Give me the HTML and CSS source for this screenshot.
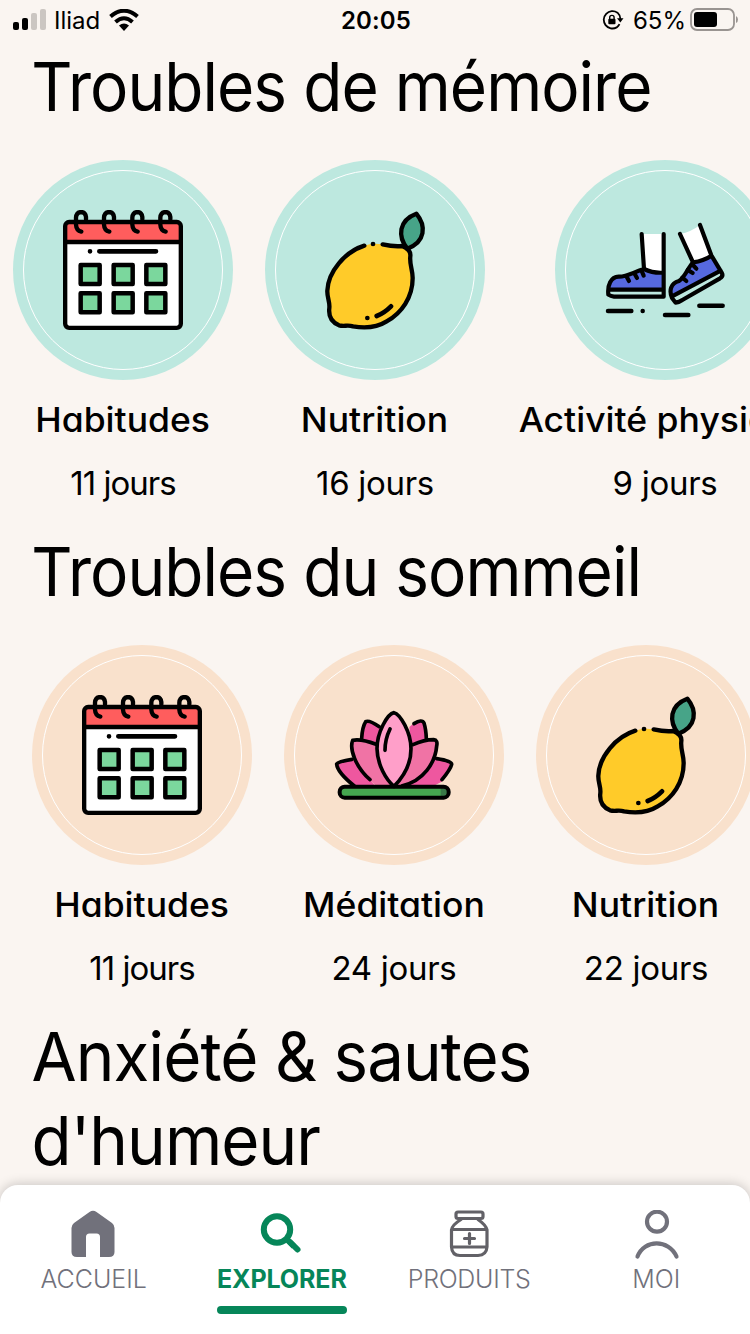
FILE: index.html
```
<!DOCTYPE html>
<html lang="fr">
    <head>
        <meta charset="utf-8">
        <title>Explorer</title>
        <link rel="stylesheet" href="styles.css">
    </head>

    <body>
        <!-- shared pictures -->
        <svg class="sprites">
            <symbol id="calendar" viewBox="159 165 360 360">
                <rect x="165" y="201" width="348" height="318" rx="14" fill="#fff"/>
                <path d="M165 260V213q0-12 12-12H501q12 0 12 12V260Z" fill="#ff5d5d"/>
                <g fill="none" stroke="#000" stroke-width="13" stroke-linecap="round">
                    <rect x="165.500" y="201" width="347" height="317.500" rx="12"/>
                    <path d="M165 261H513M268 289H438M240 289h.1" stroke-width="14"/>
                    <path d="M228 193V186Q226 171 213 171Q199 172 198 188V209Q199 227 214 230M312 193V186Q310 171 297 171Q283 172 282 188V209Q283 227 298 230M397 193V186Q395 171 382 171Q368 172 367 188V209Q368 227 383 230M481 193V186Q479 171 466 171Q452 172 451 188V209Q452 227 467 230" stroke-width="13"/>
                </g>
                <g fill="#7bd79d" stroke="#000" stroke-width="13.500" stroke-linejoin="round">
                    <rect x="212" y="330" width="57" height="57"/>
                    <rect x="311" y="330" width="57" height="57"/>
                    <rect x="409" y="330" width="57" height="57"/>
                    <rect x="212" y="415" width="57" height="57"/>
                    <rect x="311" y="415" width="57" height="57"/>
                    <rect x="409" y="415" width="57" height="57"/>
                </g>
            </symbol>

            <symbol id="lemon" viewBox="165 165 360 360">
                <path d="M313 272C255 290 204 350 202 407C201 427 210 440 208 459C205 484 212 501 237 511C253 515 263 509 279 514C313 520 350 518 380 499C425 474 458 427 458 369C458 344 448 329 451 303C453 286 441 279 426 273C407 275 390 273 368 268Q336 263 313 272Z" fill="#ffcb29"/>
                <path d="M442 281C413 245 415 196 469 176C499 212 497 261 442 281Z" fill="#47a488"/>
                <g fill="none" stroke="#000" stroke-width="13" stroke-linecap="round" stroke-linejoin="round">
                    <path d="M313 272C255 290 204 350 202 407C201 427 210 440 208 459C205 484 212 501 237 511C253 515 263 509 279 514C313 520 350 518 380 499C425 474 458 427 458 369C458 344 448 329 451 303C453 286 441 279 426 273C407 275 390 273 368 268"/>
                    <path d="M442 281C413 245 415 196 469 176C499 212 497 261 442 281Z"/>
                    <path d="M339 267h.1M322 489h.1M350 483Q373 474 393 454" stroke-width="14"/>
                </g>
            </symbol>

            <symbol id="shoes" viewBox="165 165 360 360">
                <path d="M275 237H341V353L316 351L282 342ZM390 237Q423 231 450 210L482 302Q461 318 429 322Z" fill="#fff"/>
                <path d="M176 404C177 382 186 366 206 365C230 366 249 352 282 342Q309 355 341 353V404ZM364 424C356 398 367 385 387 378C406 366 413 339 429 322Q461 318 485 303L515 350Z" fill="#5669df"/>
                <path d="M175 405H340V425H190L175 419ZM365 427L512 353L518 363L377 443Z" fill="#bde8df"/>
                <g fill="none" stroke="#000" stroke-width="12.500" stroke-linecap="round" stroke-linejoin="round">
                    <path d="M275 237L282 342C249 352 230 366 206 365C182 366 172 391 175 419Q182 424 192 425H341V237M177 404H340M282 342Q309 355 339 353"/>
                    <path d="M390 237L429 322C413 339 406 366 387 378C361 385 357 408 366 429L377 443Q387 442 397 435L510 370Q521 363 515 353L484 301L450 210M366 424L512 347M429 322Q461 318 483 303"/>
                    <path d="M275 348L281 362M253 355L261 369M230 365L237 378M426 327L439 341M413 345L428 354M397 368L409 378"/>
                    <path d="M174 468H244M278 468h.1M345 480H415M448 452H518" stroke-width="13.500"/>
                </g>
            </symbol>

            <symbol id="lotus" viewBox="162 165 360 360">
                <path d="M242 302Q245 262 257 245Q265 237 301 261L294 310ZM388 261L404 247Q427 234 433 256Q440 278 440 302L394 320Z" fill="#ee579f"/>
                <path d="M220 357Q180 362 170 372Q171 389 188 409Q206 433 228 440L285 437ZM465 356Q503 359 515 370Q514 390 485 425L455 441L365 439Z" fill="#ee579f"/>
                <path d="M215 302C232 294 270 305 290 319Q288 381 334 437L285 435Q213 373 215 302ZM394 319Q428 300 460 299Q474 300 470 318C468 364 438 423 364 438H350Q398 378 394 319Z" fill="#f073a5"/>
                <path d="M342 218C322 222 291 277 291 326C292 375 319 420 342 439C369 412 393 374 393 326C393 276 360 222 342 218Z" fill="#ff9fc9"/>
                <rect x="179" y="440" width="326" height="34" rx="14" fill="#45a750"/>
                <path d="M482 444H499Q506 456 499 469H482Z" fill="#397948"/>
                <g fill="none" stroke="#000" stroke-width="11" stroke-linecap="round" stroke-linejoin="round">
                    <path d="M342 218C322 222 291 277 291 326C292 375 319 420 342 439C369 412 393 374 393 326C393 276 360 222 342 218ZM330 267Q315 298 315 331"/>
                    <path d="M298 260Q267 239 257 245Q247 260 245 295M402 251Q426 236 432 249Q438 268 439 296"/>
                    <path d="M288 313Q244 296 218 301C208 326 226 381 270 419M399 314Q432 299 461 299Q474 300 470 318C466 368 430 423 367 437"/>
                    <path d="M216 358Q175 364 170 372Q172 397 223 438M470 356Q516 363 515 373Q512 387 486 419"/>
                    <rect x="179" y="440" width="327" height="33" rx="15" stroke-width="12"/>
                </g>
            </symbol>
        </svg>

        <div class="status-bar">
            <div class="status-left">
                <svg width="34" height="22" viewBox="0 0 34 22">
                    <rect y="13" width="6" height="8" rx="2"/>
                    <rect x="9" y="9" width="6" height="12" rx="2"/>
                    <rect x="18" y="4" width="6" height="17" rx="2" fill="#cbc6c2"/>
                    <rect x="27" width="6" height="21" rx="2" fill="#cbc6c2"/>
                </svg>
                <span class="carrier">Iliad</span>
                <svg width="30" height="22" viewBox="0 0 30 22">
                    <g fill="none" stroke="#000" stroke-width="4">
                        <path d="M1.500 7.500Q15-4 28.500 7.500M6.500 13Q15 5.500 23.500 13"/>
                    </g>
                    <path d="M10 16.500Q15 12.500 20 16.500L15 22Z"/>
                </svg>
            </div>
            <div class="clock">20:05</div>
            <div class="status-right">
                <svg width="22" height="20" viewBox="0 0 22 20">
                    <path d="M15.500 2.700A8.700 8.700 0 1 0 14.700 17.400M15.500 2.700A8.700 8.700 0 0 1 18.400 9M17.500 14.200A8.700 8.700 0 0 1 14.700 17.400" fill="none" stroke="#000" stroke-width="1.800"/>
                    <path d="M15 8.200H21.500L18.300 12.500Z"/>
                    <rect x="6.300" y="8.700" width="7.200" height="5.600" rx="1"/>
                    <path d="M7.700 9V7.500Q7.700 5.400 9.900 5.400Q12.100 5.400 12.100 7.500V9" fill="none" stroke="#000" stroke-width="1.400"/>
                </svg>
                <span class="percent">65%</span>
                <svg width="49" height="24" viewBox="0 0 49 24">
                    <rect x="1" y="1" width="43" height="21" rx="6" fill="none" stroke="#999491" stroke-width="1.800"/>
                    <rect x="4" y="4" width="23" height="15" rx="3"/>
                    <path d="M46 8Q48 9 48 11.500T46 15Z" fill="#999491"/>
                </svg>
            </div>
        </div>

        <main class="content">
            <section>
                <h1>Troubles de mémoire</h1>
                <div class="programs mint scrolled">
                    <div class="program">
                        <div class="circle"><svg class="picture"><use href="#calendar"/></svg></div>
                        <div class="name">Habitudes</div>
                        <div class="days eleven">11 jours</div>
                    </div>
                    <div class="program">
                        <div class="circle"><svg class="picture"><use href="#lemon"/></svg></div>
                        <div class="name">Nutrition</div>
                        <div class="days">16 jours</div>
                    </div>
                    <div class="program wide">
                        <div class="circle"><svg class="picture"><use href="#shoes"/></svg></div>
                        <div class="name">Activité physique</div>
                        <div class="days">9 jours</div>
                    </div>
                </div>
            </section>

            <section>
                <h1>Troubles du sommeil</h1>
                <div class="programs peach">
                    <div class="program">
                        <div class="circle"><svg class="picture"><use href="#calendar"/></svg></div>
                        <div class="name">Habitudes</div>
                        <div class="days eleven">11 jours</div>
                    </div>
                    <div class="program">
                        <div class="circle"><svg class="picture"><use href="#lotus"/></svg></div>
                        <div class="name">Méditation</div>
                        <div class="days">24 jours</div>
                    </div>
                    <div class="program">
                        <div class="circle"><svg class="picture"><use href="#lemon"/></svg></div>
                        <div class="name">Nutrition</div>
                        <div class="days">22 jours</div>
                    </div>
                </div>
            </section>

            <section>
                <h1 class="long-title">Anxiété &amp; sautes d'humeur</h1>
            </section>
        </main>

        <nav class="tab-bar">
            <a class="tab">
                <svg width="50" height="50" viewBox="0 0 50 50">
                    <path d="M20.500 2Q24-.5 27.500 2L43 13Q45.500 15 45.500 18V42Q45.500 47 40 47H31V27Q31 23.500 27.500 23.500H20.500Q17 23.500 17 27V47H8Q2.500 47 2.500 42V18Q2.500 15 5 13Z" fill="currentColor"/>
                </svg>
                <span>ACCUEIL</span>
            </a>
            <a class="tab active">
                <svg width="50" height="50" viewBox="0 0 50 50">
                    <circle cx="20" cy="19.500" r="13.200" fill="none" stroke="currentColor" stroke-width="6"/>
                    <path d="M29 28.500L37 36.500" fill="none" stroke="currentColor" stroke-width="6"/>
                    <path d="M33.500 32.500L40.500 39.500" fill="none" stroke="currentColor" stroke-width="6" stroke-linecap="round"/>
                </svg>
                <span>EXPLORER</span>
            </a>
            <a class="tab products">
                <svg width="48" height="50" viewBox="0 0 48 50">
                    <g fill="none" stroke="#626167" stroke-width="3.200" stroke-linejoin="round" stroke-linecap="round">
                        <rect x="11" y="2" width="27" height="6.500" rx="2"/>
                        <path d="M16 9.500Q7 15 6.500 20V37Q7 45.500 15 45.500H33Q41.500 45 42 37V20Q41 15 33 9.500M7 19.500H42M7 37H42M19.500 28.500H29.500M24.500 23.500V33.500"/>
                    </g>
                </svg>
                <span>PRODUITS</span>
            </a>
            <a class="tab">
                <svg width="48" height="50" viewBox="0 0 48 50">
                    <g fill="none" stroke="currentColor" stroke-width="4.200" stroke-linecap="round">
                        <circle cx="25" cy="11.700" r="10"/>
                        <path d="M5.500 46.500C12 29 37 29 44.500 46.500"/>
                    </g>
                </svg>
                <span>MOI</span>
            </a>
        </nav>
    </body>
</html>
```
FILE: styles.css
```
*,
*::before {
    box-sizing: border-box;
}
body {
    margin: 0;
    width: 750px;
    height: 1334px;
    overflow: hidden;
    display: flex;
    flex-direction: column;
    background-color: #faf5f1;
    color: #000;
    font-family: Inter, "Liberation Sans", sans-serif;
}
svg {
    display: block;
    flex-shrink: 0;
}
.sprites {
    display: none;
}
.status-bar {
    display: grid;
    grid-template-columns: 1fr auto 1fr;
    align-items: center;
    height: 44px;
    flex-shrink: 0;
    padding: 0 11px 2px 13px;
    font-size: 24px;
    line-height: 30px;
}
.status-left,
.status-right {
    display: flex;
    align-items: center;
}
.status-left svg {
    margin-top: -2px;
}
.status-right {
    justify-content: flex-end;
}
.status-right svg {
    margin-top: -2px;
}
.carrier {
    margin: 0 9px 0 7px;
}
.clock {
    font-weight: 600;
    letter-spacing: 0.1px;
}
.percent {
    margin: 0 4px 0 9px;
}
.content {
    flex: 1;
    min-height: 0;
}
h1 {
    margin: 0;
    padding: 0 32px;
    font-size: 68px;
    font-weight: 400;
    line-height: 84px;
    letter-spacing: -1px;
    transform: scaleX(0.94);
    transform-origin: 20px 0;
}
.long-title {
    transform: scaleX(0.963);
}
.programs {
    display: flex;
    gap: 32px;
    height: 401px;
    padding: 32px 0 0 32px;
    overflow: hidden;
    text-align: center;
    white-space: nowrap;
}
.scrolled {
    padding-left: 13px;
}
.program {
    width: 220px;
    flex-shrink: 0;
    display: flex;
    flex-direction: column;
    align-items: center;
    font-size: 34px;
    font-feature-settings: "cv11";
}
.wide {
    width: 296px;
}
.circle {
    width: 220px;
    height: 220px;
    padding: 10px;
    border-radius: 50%;
    display: flex;
    align-items: center;
    justify-content: center;
}
/* thin inner ring, the picture sits in the middle of it */
.circle::before {
    content: "";
    width: 200px;
    height: 200px;
    flex-shrink: 0;
    border: 1px solid #fff;
    border-radius: 50%;
    margin-right: -160px;
}
.mint .circle {
    background-color: #bde8df;
}
.peach .circle {
    background-color: #f9e1cc;
}
.picture {
    width: 120px;
    height: 120px;
    margin-right: 40px;
}
.name {
    margin-top: 15px;
    font-weight: 500;
    line-height: 50px;
    transform: scaleX(1.045);
}
.days {
    margin-top: 13px;
    font-size: 33px;
    line-height: 50px;
    letter-spacing: -0.3px;
}
.eleven {
    letter-spacing: -1px;
}
.tab-bar {
    display: flex;
    height: 149px;
    flex-shrink: 0;
    position: relative;
    background-color: #fff;
    border-radius: 18px 18px 0 0;
    box-shadow: 0 -1px 12px rgba(0, 0, 0, 0.2);
    color: #71717b;
}
.tab {
    flex: 1;
    display: flex;
    flex-direction: column;
    align-items: center;
    padding-top: 25px;
    font-size: 25px;
    font-weight: 300;
    line-height: 38px;
}
.products {
    letter-spacing: -0.3px;
}
.active {
    padding-left: 1px;
    color: #068659;
    font-weight: 700;
    letter-spacing: -0.1px;
}
.active::after {
    content: "";
    width: 130px;
    height: 8px;
    margin-top: 8px;
    border-radius: 4px;
    background-color: #068659;
}
```
